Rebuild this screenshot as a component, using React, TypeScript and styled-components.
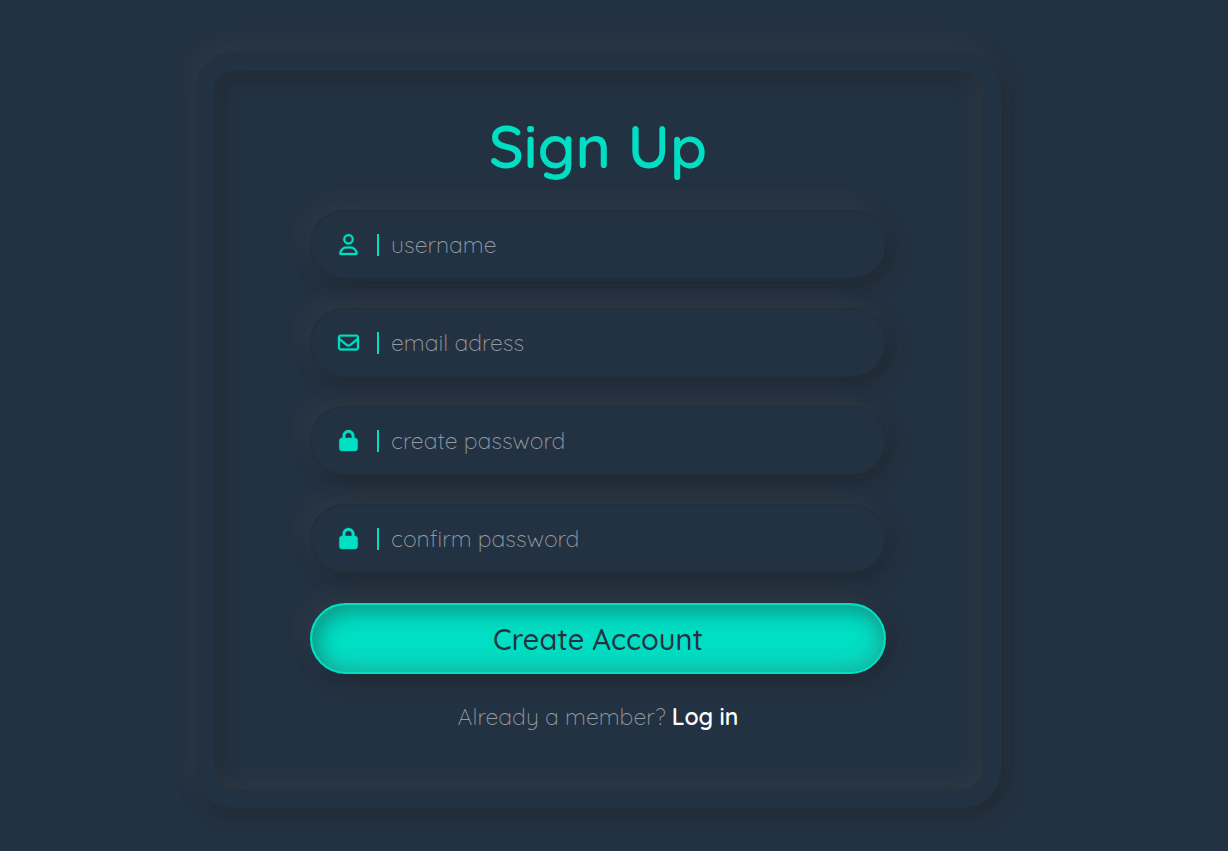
import React from 'react';
import styled, { createGlobalStyle } from 'styled-components';
import { FaRegUser, FaRegEnvelope, FaLock } from 'react-icons/fa6';

const raised = `
  -6px -8px 20px rgba(88, 84, 84, 0.2),
  6px 8px 20px rgba(29, 29, 29, 0.36)`;

const sunken = `
  inset -6px -8px 20px rgba(88, 84, 84, 0.2),
  inset 6px 8px 20px rgba(29, 29, 29, 0.32)`;

const GlobalStyle = createGlobalStyle`
  *, *::before, *::after { box-sizing: border-box; }
  body {
    margin: 0;
    background: #233242;
    color: #949ba2;
    font-family: Quicksand, Lato, "Open Sans", sans-serif;
  }
`;

const Page = styled.main`
  display: flex;
  justify-content: center;
  min-height: 100vh;
  padding: 52px 48px 43px 16px;
`;

const Card = styled.section`
  width: 100%;
  max-width: 806px;
  padding: 19px;
  border-radius: 38px;
  box-shadow: ${raised};
`;

const Panel = styled.form`
  display: flex;
  flex-direction: column;
  align-items: center;
  height: 100%;
  padding: 37px 12.5% 56px;
  border-radius: 20px;
  box-shadow: ${sunken};
`;

const Title = styled.h1`
  margin: 0 0 26px;
  color: #00dfc4;
  font-size: 60px;
  font-weight: 600;
  line-height: 76px;
`;

const Fields = styled.div`
  display: flex;
  flex-direction: column;
  gap: 29px;
  width: 100%;
`;

const Field = styled.div`
  display: flex;
  align-items: center;
  height: 69px;
  padding: 0 28px;
  border-radius: 35px;
  background: #233242;
  box-shadow: ${raised}, inset 0 0 2px rgba(29, 29, 29, 0.5);
`;

const FieldIcon = styled.label`
  display: flex;
  align-items: center;
  width: 41px;
  height: 22px;
  border-right: 2px solid #00dfc4;
  color: #00dfc4;
  font-size: 21px;

  svg {
    overflow: visible;
    stroke: currentColor;
    stroke-width: 8px;
  }
`;

const TextInput = styled.input`
  flex: 1;
  min-width: 0;
  padding: 0 0 0 12px;
  border: 0;
  outline: 0;
  background: transparent;
  color: #949ba2;
  font-family: inherit;
  font-size: 23px;
  font-weight: 300;
  line-height: 30px;
  &::placeholder { color: #949ba2; opacity: 1; }
`;

const SubmitButton = styled.button`
  width: 100%;
  height: 71px;
  margin-top: 30px;
  border: 2px solid #00dfc4;
  border-radius: 36px;
  background: #00dfc4;
  color: #233242;
  font-family: inherit;
  font-size: 29px;
  font-weight: 500;
  cursor: pointer;
  box-shadow: ${raised}, ${sunken};
`;

const Footnote = styled.p`
  margin: 28px 0 0;
  font-size: 23px;
  font-weight: 300;
  line-height: 30px;
`;

const LoginLink = styled.a`
  color: #fff;
  font-weight: 600;
  text-decoration: none;
`;

const fields = [
  { id: 'username', type: 'text', text: 'username', Icon: FaRegUser },
  { id: 'email', type: 'email', text: 'email adress', Icon: FaRegEnvelope },
  { id: 'password', type: 'password', text: 'create password', Icon: FaLock },
  { id: 'confirm', type: 'password', text: 'confirm password', Icon: FaLock },
];

export default function App() {
  return (
    <>
      <GlobalStyle />
      <Page>
        <Card>
          <Panel onSubmit={(event) => event.preventDefault()}>
            <Title>Sign Up</Title>
            <Fields>
              {fields.map(({ id, type, text, Icon }) => (
                <Field key={id}>
                  <FieldIcon htmlFor={id} aria-label={text}>
                    <Icon aria-hidden="true" />
                  </FieldIcon>
                  <TextInput id={id} name={id} type={type} placeholder={text} />
                </Field>
              ))}
            </Fields>
            <SubmitButton type="submit">Create Account</SubmitButton>
            <Footnote>
              Already a member? <LoginLink href="#login">Log in</LoginLink>
            </Footnote>
          </Panel>
        </Card>
      </Page>
    </>
  );
}
